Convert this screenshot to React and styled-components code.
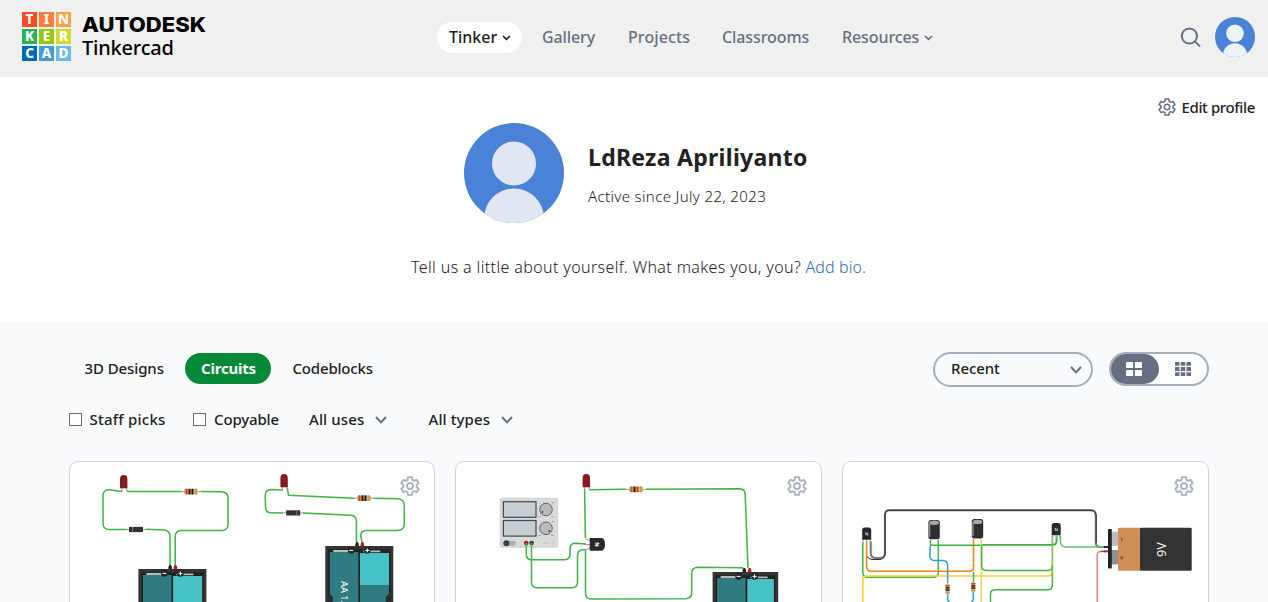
import React from 'react';
import styled, { createGlobalStyle } from 'styled-components';

const GlobalStyle = createGlobalStyle`
  * { box-sizing: border-box; }
  body {
    margin: 0;
    overflow: hidden;
    background: #f9fafc;
    color: #222;
    font-family: "Noto Sans", sans-serif;
    font-size: 15px;
  }
  svg { display: block; flex: none; }
`;

const Page = styled.div`
  height: 100vh;
  overflow: hidden;
  display: flex;
  flex-direction: column;
`;

const Label = styled.span`
  display: block;
  white-space: nowrap;
  width: ${p => (p.$w ? `${p.$w}px` : 'auto')};
  letter-spacing: ${p => p.$ls || 0}px;
`;

/* ---------- header ---------- */

const Header = styled.header`
  flex: none;
  height: 77px;
  padding: 0 13px 0 22px;
  display: flex;
  background: #f0f0f0;
`;

const Brand = styled.a`
  display: flex;
  width: 415px;
  padding-top: 12px;
  gap: 11px;
  color: #000;
`;

const Tiles = styled.div`
  display: grid;
  grid-template-columns: repeat(3, 15px);
  grid-auto-rows: 15px;
  gap: 2px;
`;

const Tile = styled.span`
  background: ${p => p.$c};
  color: #fff;
  font-size: 13.5px;
  font-weight: 800;
  line-height: 15px;
  text-align: center;
`;

const BrandText = styled.div`
  display: flex;
  flex-direction: column;
`;

const Company = styled.span`
  height: 24px;
  font-family: Inter, sans-serif;
  font-size: 20.5px;
  font-weight: 800;
  line-height: 26px;
  transform: scaleX(1.075);
  transform-origin: 0 0;
`;

const Product = styled.span`
  font-size: 20px;
  font-weight: 500;
  line-height: 24px;
  letter-spacing: -0.2px;
`;

const Nav = styled.nav`
  display: flex;
  gap: 32px;
  height: 31px;
  margin-top: 22px;
  font-size: 16px;
  font-weight: 500;
  line-height: 28px;
  color: #667081;
`;

const NavItem = styled.a`
  display: flex;
  align-items: center;
  gap: 5px;
  ${p => p.$active && `
    width: 85px;
    margin-right: -12px;
    padding-left: 12px;
    border-radius: 16px;
    background: #fff;
    color: #1d1d1d;
  `}
  ${Label} { height: 30px; }
`;

const HeaderTools = styled.div`
  display: flex;
  align-items: flex-start;
  gap: 14px;
  margin-left: auto;
  padding-top: 17px;
`;

const SearchBox = styled.span`
  padding-top: 10px;
`;

/* ---------- profile ---------- */

const Profile = styled.section`
  flex: none;
  height: 245px;
  padding-top: 20px;
  background: #fff;
`;

const EditRow = styled.a`
  display: flex;
  justify-content: flex-end;
  align-items: center;
  gap: 5px;
  height: 20px;
  margin-bottom: 6px;
  padding-right: 12.5px;
  font-weight: 500;
  line-height: 22px;
`;

const Identity = styled.div`
  display: flex;
  gap: 24px;
  margin-left: 464px;
`;

const IdentityText = styled.div`
  padding-top: 18px;
`;

const Name = styled.h1`
  margin: 0 0 11px;
  font-size: 23px;
  font-weight: 700;
  line-height: 32px;
  letter-spacing: 0.28px;
`;

const Since = styled.p`
  margin: 0;
  font-weight: 300;
  line-height: 24px;
  letter-spacing: 0.36px;
`;

const Bio = styled.p`
  display: flex;
  margin: 32px 0 0 411px;
  font-size: 16px;
  font-weight: 300;
  line-height: 24px;
`;

const BioLink = styled.a`
  color: #2d6db8;
  text-decoration: none;
`;

/* ---------- gallery ---------- */

const Content = styled.main`
  width: 1140px;
  margin-left: 69px;
  padding-top: 30px;
`;

const Toolbar = styled.div`
  display: flex;
  height: 35px;
`;

const Tabs = styled.div`
  display: flex;
  gap: 5.5px;
  padding-top: 1px;
`;

const Tab = styled.button`
  width: ${p => p.$width}px;
  height: 31px;
  padding: 0 0 0 ${p => p.$pad || 16}px;
  border: 0;
  border-radius: 16px;
  background: ${p => (p.$active ? '#048a36' : 'none')};
  color: ${p => (p.$active ? '#fff' : 'inherit')};
  font: inherit;
  font-weight: ${p => (p.$active ? 700 : 500)};
  line-height: 31px;
  text-align: left;
`;

const SortSelect = styled.div`
  display: flex;
  align-items: center;
  justify-content: space-between;
  width: 160px;
  height: 35px;
  margin-left: auto;
  padding: 0 9px 0 16px;
  border: 2px solid #a6aebc;
  border-radius: 18px;
  font-weight: 500;
  ${Label} { height: 31px; line-height: 29px; }
`;

const ViewToggle = styled.div`
  display: flex;
  width: 100px;
  height: 34px;
  margin-left: 16px;
  border: 2px solid #a6aebc;
  border-radius: 17px;
  background: #fff;
`;

const ViewOption = styled.span`
  display: grid;
  place-items: center;
  width: 48px;
  padding-right: ${p => (p.$active ? 2 : 0)}px;
  border-radius: 15px;
  background: ${p => (p.$active ? '#666f82' : 'none')};
  color: ${p => (p.$active ? '#fff' : '#666f82')};
`;

const Filters = styled.div`
  display: flex;
  align-items: center;
  height: 25px;
  margin: 20px 0 29px;
  font-weight: 500;
  ${Label} { height: 25px; line-height: 24px; }
`;

const Filter = styled.label`
  display: flex;
  align-items: center;
  gap: ${p => p.$gap}px;
  width: ${p => p.$width}px;
`;

const Checkbox = styled.span`
  width: 13px;
  height: 13px;
  border: 1px solid #6d6d6d;
  background: #fff;
`;

const Cards = styled.div`
  display: grid;
  grid-template-columns: 366px 367px 367px;
  gap: 20px;
`;

const Card = styled.article`
  position: relative;
  height: 260px;
  overflow: hidden;
  border: 1px solid #cfd4da;
  border-radius: 9px;
  background: #fff;
`;

const CardMenu = styled.span`
  position: absolute;
  top: 13px;
  right: 13px;
`;

/* ---------- icons ---------- */

const gearPath = (() => {
  const pts = [];
  for (let i = 0; i < 6; i += 1) {
    [[-21, 6.6], [-13, 9.1], [13, 9.1], [21, 6.6]].forEach(([d, r]) => {
      const a = ((i * 60 + d - 90) * Math.PI) / 180;
      pts.push(`${(11 + r * Math.cos(a)).toFixed(2)} ${(11 + r * Math.sin(a)).toFixed(2)}`);
    });
  }
  return `M${pts.join('L')}Z`;
})();

const Gear = ({ size = 22, color, stroke = 1.8 }) => (
  <svg width={size} height={size} viewBox="0 0 22 22" fill="none" stroke={color} strokeWidth={stroke} strokeLinejoin="round">
    <path d={gearPath} />
    <circle cx="11" cy="11" r="3" />
  </svg>
);

const Chevron = ({ w, h, color = 'currentColor', stroke = 2 }) => (
  <svg width={w} height={h} viewBox={`0 0 ${w} ${h}`} fill="none" stroke={color} strokeWidth={stroke}>
    <path d={`M1 1L${w / 2} ${h - 1.6}L${w - 1} 1`} />
  </svg>
);

const Avatar = ({ size, light }) => (
  <svg width={size} height={size} viewBox="0 0 100 100">
    <clipPath id={`avatar${size}`}><circle cx="50" cy="50" r="50" /></clipPath>
    <g clipPath={`url(#avatar${size})`}>
      <rect width="100" height="100" fill="#4a82d8" />
      <circle cx="50" cy="40.5" r="22" fill={light} />
      <circle cx="50" cy="95.5" r="30" fill={light} />
    </g>
  </svg>
);

const GridIcon = ({ n }) => {
  const gap = n === 2 ? 1.8 : 1.2;
  const w = (16 - gap * (n - 1)) / n;
  const h = (14 - gap * (n - 1)) / n;
  return (
    <svg width="16" height="14" fill="currentColor">
      {Array.from({ length: n * n }, (_, i) => (
        <rect key={i} x={(i % n) * (w + gap)} y={Math.floor(i / n) * (h + gap)} width={w} height={h} rx="0.5" />
      ))}
    </svg>
  );
};

/* ---------- circuit parts ---------- */

const GREEN = '#3db443';

const Wire = ({ d, c = GREEN, w = 1.5 }) => (
  <path d={d} fill="none" stroke={c} strokeWidth={w} strokeLinejoin="round" />
);

const Led = ({ x, y }) => (
  <g>
    <path d={`M${x + 2} ${y + 12}v5M${x + 6} ${y + 12}l1 4`} stroke="#999" fill="none" />
    <path d={`M${x} ${y + 4}a3.7 4 0 0 1 7.4 0v8l.4 1.3h-7.8z`} fill="#861c1e" />
  </g>
);

const Resistor = ({ x, y, vertical, bands = ['#e8321b', '#1a1a1a', '#1a1a1a', '#c49b50'] }) => (
  <g transform={`translate(${x} ${y})${vertical ? ' rotate(90) scale(.72)' : ''}`}>
    <path d="M-11 0H11" stroke="#9a9a9a" />
    <rect x="-7" y="-2.8" width="14" height="5.6" rx="1.8" fill="#dcb670" />
    {bands.map((c, i) => <rect key={i} x={[-5.5, -2.5, 0.5, 4][i]} y="-2.8" width="2" height="5.6" fill={c} />)}
  </g>
);

const Diode = ({ x, y, band }) => (
  <g>
    <path d={`M${x - 4} ${y}h22`} stroke="#999" />
    <rect x={x} y={y - 2.6} width="14" height="5.2" fill="#303133" />
    <rect x={x + band} y={y - 2.6} width="1.2" height="5.2" fill="#6b7780" />
  </g>
);

const BatteryPack = ({ x, y, w = 68, split, children }) => (
  <g transform={`translate(${x} ${y})`}>
    <path d="M30 0v-2l1-2h1.5l1 2v2z" fill="#222" />
    <path d="M35.3 0v-2l1-2h1.5l1 2v2z" fill="#b51d20" />
    <rect width={w} height="90" fill="#333" />
    <rect x="3" y="3.5" width={w - 6} height="90" fill="#1f2122" />
    <rect x="4.5" y="6" width="28.5" height="90" fill="#2f7c80" />
    <rect x="34.7" y="7" width={w - 39} height="90" fill="#46c2c6" />
    {split && <rect x="34.7" y="39" width={w - 39} height="60" fill="#2f7c80" />}
    {split && <path d="M3 46l4.5 5v40H3zM65 46l-4.5 5v40H65z" fill="#2b2c2d" />}
    <path d="M8 5h16M38 5.3h17" stroke="#b8babb" strokeWidth="1.8" />
    <circle cx="26" cy="4.4" r="3.3" fill="#252525" />
    <circle cx="42" cy="4.4" r="3.3" fill="#252525" />
    <path d="M24 4.4h4M40 4.4h4M42 2.4v4" stroke="#fff" />
    {children}
  </g>
);

const Capacitor = ({ x, y }) => (
  <g>
    <rect x={x} y={y} width="11.4" height="19.3" rx="2.6" fill="#2e2f31" />
    <path d={`M${x + 1.2} ${y + 4}v13`} stroke="#8d9499" strokeWidth="1.4" />
    <ellipse cx={x + 5.7} cy={y + 2.8} rx="4.8" ry="2.2" fill="#a6a7a9" />
  </g>
);

const Transistor = ({ x, y }) => (
  <g>
    <path d={`M${x + 1} ${y + 11}v5M${x + 4.5} ${y + 11}v5M${x + 8} ${y + 11}v5`} stroke="#aaa" strokeWidth=".9" />
    <path d={`M${x} ${y + 12.3}v-9.8q0-2.5 2.5-2.5h4q2.5 0 2.5 2.5v9.8z`} fill="#27282a" />
    <path d={`M${x + 3.6} ${y + 8}v-2.8l2 2.8v-2.8`} fill="none" stroke="#d7d7d7" strokeWidth=".8" />
  </g>
);

const Scene = ({ x, children }) => (
  <svg width="365" height="258" viewBox={`${x} 462 365 258`}>{children}</svg>
);

const LedLoops = () => (
  <Scene x={70}>
    <Wire d="M122 491.5L109 489.8Q103 489.5 103 496V523Q103 529.5 109 529.5H127" />
    <Wire d="M127 490.5L128 491.6H181M201 491.6L221 491.8Q228 492 228 498V524Q228 530.5 222 530.5H181Q175.2 530.8 175.2 537V566" />
    <Wire d="M146 529.3L164 530Q170 530.5 170 537V566" />
    <Led x={120} y={475} />
    <Resistor x={191} y={491.6} />
    <Diode x={129} y={529.5} band={3} />
    <BatteryPack x={138.4} y={569} />

    <Wire d="M282 490L271 489.6Q265.2 490 265.2 496L265.5 507Q265.5 512.8 271 512.8L283 513" />
    <Wire d="M287.4 488L288.4 495.2L354 498.3M374 498.3L398 498.7Q404.3 499.5 404.3 505V523Q404.3 530.5 398 530.5H366Q360.8 530.5 360.8 536L362 542" />
    <Wire d="M303 513L351 515.3Q356.4 515.6 356.4 522V542" />
    <Led x={280.4} y={474} />
    <Resistor x={364} y={498.2} />
    <Diode x={286.2} y={512.9} band={10} />
    <BatteryPack x={325.3} y={546} split>
      <text transform="translate(15.8 35) rotate(90)" fill="#eef5f5" fontSize="9" fontWeight="500">AA 1.5V</text>
    </BatteryPack>
  </Scene>
);

const PowerSupply = ({ x, y }) => (
  <g transform={`translate(${x} ${y})`}>
    <rect width="57.5" height="49" rx="1" fill="#d9dada" stroke="#c3c4c4" strokeWidth=".6" />
    {[3.5, 22.3].map(top => (
      <g key={top}>
        <rect x="3.2" y={top} width="32.6" height="15.6" fill="#c5cfd3" stroke="#44494b" strokeWidth="1.2" />
        <circle cx="45.8" cy={top + 7.8} r="6.3" fill="#b9bbbb" stroke="#55595a" strokeWidth=".9" />
        <path d={`M38 ${top + 15}h3M51 ${top + 15}h3M51.5 ${top + 1}h3`} stroke="#a0a2a2" strokeWidth=".9" />
      </g>
    ))}
    <circle cx="42.2" cy="13.8" r=".9" fill="#444" />
    <circle cx="49" cy="32.8" r=".9" fill="#444" />
    <rect x="3" y="42.6" width="12.5" height="5" rx="2.5" fill="#adafaf" />
    <circle cx="6.2" cy="45" r="3" fill="#3c4244" />
    <path d="M43 45h6M52 46l2-3" stroke="#c8caca" strokeWidth="1.8" />
    <circle cx="26" cy="44.8" r="2.3" fill="#b51d20" />
    <circle cx="31.4" cy="44.8" r="2.3" fill="#35403a" />
  </g>
);

const SupplyCircuit = () => (
  <Scene x={456}>
    <PowerSupply x={500.2} y={498.2} />
    <Wire d="M526.3 543V554Q526.3 559.8 532 559.8H564Q570 559.8 570 554V549Q570 543.5 575 543.3L586 544" />
    <Wire d="M531.5 543V582Q531.5 587.7 537 587.7H572Q577.5 587.7 577.5 582V556Q577.5 549.7 583 549.7H586" />
    <Wire d="M584.6 489L585.4 538" />
    <Wire d="M589 489.8L626 489.3M646 489.3L740 488.8Q745.2 489 745.2 495L748 568" />
    <Wire d="M585.5 551V593Q585.5 599 591 599L686 598.8Q691.7 598 691.7 593V573Q692 567.3 698 567.2L742.5 567.7V569" />
    <path d="M585.5 538.5L591 541.5M584 544.5H591M585.5 550.5L591 547" stroke="#999" fill="none" />
    <path d="M589.7 538H602q3 1 3 6.3t-3 6.4H589.7z" fill="#29292b" />
    <text transform="translate(595 542.2) rotate(90)" fill="#fff" fontSize="5.5" fontWeight="800">N</text>
    <Led x={582.6} y={474} />
    <Resistor x={636} y={489.4} bands={['#a5672c', '#1a1a1a', '#e8321b', '#c49b50']} />
    <BatteryPack x={712.6} y={572} w={65.6} />
  </Scene>
);

const NineVolt = ({ x, y }) => (
  <g transform={`translate(${x} ${y})`}>
    <rect x="3" y="4" width="7" height="14" fill="#bcbdbf" />
    <rect x="3" y="22.3" width="7" height="14.5" fill="#8e9092" />
    <rect y="1.3" width="3.8" height="39.4" rx=".6" fill="#232325" />
    <rect x="10" width="22.5" height="43" rx="1" fill="#cf8f55" />
    <rect x="32" width="51.7" height="43" rx="1" fill="#333334" />
    <path d="M13.8 9.7v3.6M12 30h3.6M13.8 28.2v3.6" stroke="#754717" strokeWidth=".9" />
    <text transform="translate(58.2 29.2) rotate(-90)" fill="#f2f2f2" fontSize="12.6">9V</text>
  </g>
);

const SensorCircuit = () => (
  <Scene x={843}>
    <Wire d="M870.7 541V553Q870.8 558 876 558H880Q885 558 885 553V515Q885 510 889 510H1091Q1095.8 510 1095.8 516V543Q1096 547 1100 547H1107" c="#77797b" w={2.1} />
    <Wire d="M867 556Q868 559 872 559.5H879Q884.6 559.5 885 554V515Q885 510.7 889 510.7H1091Q1096.2 510.7 1096.2 516V543" c="#2c2d2e" w={1} />
    <Wire d="M862.8 542V572Q863 577 867 577.2H934Q938.3 577 938.3 572V540" />
    <Wire d="M862.8 602V578Q863 576 866 576H1048Q1052.3 576 1052.3 572V566" c="#f3d32c" w={1.6} />
    <Wire d="M866.6 541V566Q867 571.3 871 571.3H970Q973.5 571 973.5 567V539" c="#ee8712" w={1.6} />
    <Wire d="M930.5 540V545.2H981" />
    <Wire d="M981 544.9H1052Q1056.6 544.9 1056.6 541V536" w={1.9} />
    <Wire d="M930.2 546L929.9 556Q930 560.4 934 560.4H943Q947.6 560.5 947.6 565V583M947.6 594V600L950 603M973.3 592V600L971 603" c="#2d9fd0" />
    <Wire d="M973.5 572V582" />
    <Wire d="M981.3 539V602" c="#e9d95c" w={1.7} />
    <Wire d="M981.6 545V566Q982 570.4 986 570.4H1048Q1052.4 570.4 1052.4 566V536" />
    <Wire d="M990.5 602V594Q990.5 590 995 589.8H1048Q1052.4 589.6 1052.4 585V566" />
    <Wire d="M1052.5 538V574" c="#8fc229" w={1} />
    <Wire d="M1060.5 536V542Q1060.8 546.9 1066 547H1104" c="#63c068" />
    <Wire d="M1097.2 602V556Q1097 551.4 1101 551.4" c="#e5807f" />
    <Wire d="M1101 551.4H1106" c="#cc2525" />
    <path d="M1104 547h4" stroke="#222" strokeWidth="1.8" />
    <path d="M1104 551.4h4" stroke="#b51d20" strokeWidth="1.8" />
    <Transistor x={862.2} y={527.4} />
    <Capacitor x={928.4} y={520} />
    <Capacitor x={971.8} y={519.1} />
    <Transistor x={1051.7} y={523} />
    <Resistor x={947.6} y={589} vertical />
    <Resistor x={973.3} y={587} vertical />
    <NineVolt x={1108} y={527.7} />
  </Scene>
);

/* ---------- page ---------- */

const tiles = [
  ['T', '#ff4a24'], ['I', '#ff7c3a'], ['N', '#ffa042'],
  ['K', '#27b355'], ['E', '#93c90a'], ['R', '#d4d733'],
  ['C', '#0069b8'], ['A', '#479bd1'], ['D', '#6dbae0'],
];

const nav = [
  { text: 'Gallery', w: 54, ls: -0.1 },
  { text: 'Projects', w: 62, ls: 0.1 },
  { text: 'Classrooms', w: 88, ls: -0.1 },
  { text: 'Resources', w: 77, ls: -0.1, menu: true },
];

const scenes = [LedLoops, SupplyCircuit, SensorCircuit];

export default function App() {
  return (
    <Page>
      <GlobalStyle />
      <Header>
        <Brand>
          <Tiles>{tiles.map(([l, c]) => <Tile key={l} $c={c}>{l}</Tile>)}</Tiles>
          <BrandText>
            <Company>AUTODESK</Company>
            <Product>Tinkercad</Product>
          </BrandText>
        </Brand>
        <Nav>
          <NavItem $active><Label $w={48}>Tinker</Label><Chevron w={9} h={6} stroke={1.6} /></NavItem>
          {nav.map(({ text, w, ls, menu }) => (
            <NavItem key={text}>
              <Label $w={w} $ls={ls}>{text}</Label>
              {menu && <Chevron w={9} h={6} stroke={1.6} />}
            </NavItem>
          ))}
        </Nav>
        <HeaderTools>
          <SearchBox>
            <svg width="21" height="21" viewBox="0 0 21 21" fill="none" stroke="#667081" strokeWidth="2">
              <circle cx="9.4" cy="9" r="7.6" />
              <path d="M14.8 14.4L20 19.4" />
            </svg>
          </SearchBox>
          <Avatar size={40} light="#ebf2fb" />
        </HeaderTools>
      </Header>

      <Profile>
        <EditRow>
          <Gear size={20} color="#667081" stroke={1.7} />
          <Label $w={74} $ls={-0.38}>Edit profile</Label>
        </EditRow>
        <Identity>
          <Avatar size={100} light="#e1e7f2" />
          <IdentityText>
            <Name>LdReza Apriliyanto</Name>
            <Since>Active since July 22, 2023</Since>
          </IdentityText>
        </Identity>
        <Bio>
          <Label $w={394.5} $ls={0.38}>Tell us a little about yourself. What makes you, you?</Label>
          <BioLink href="#bio"><Label $ls={0.1}>Add bio.</Label></BioLink>
        </Bio>
      </Profile>

      <Content>
        <Toolbar>
          <Tabs>
            <Tab $width={110.5} $pad={15.5}><Label $ls={-0.1}>3D Designs</Label></Tab>
            <Tab $width={86} $active><Label $ls={-0.2}>Circuits</Label></Tab>
            <Tab $width={112}><Label $ls={-0.18}>Codeblocks</Label></Tab>
          </Tabs>
          <SortSelect><Label $ls={-0.1}>Recent</Label><Chevron w={12} h={8} color="#666f82" /></SortSelect>
          <ViewToggle>
            <ViewOption $active><GridIcon n={2} /></ViewOption>
            <ViewOption><GridIcon n={3} /></ViewOption>
          </ViewToggle>
        </Toolbar>
        <Filters>
          <Filter $gap={7.5} $width={124}><Checkbox /><Label $ls={0.22}>Staff picks</Label></Filter>
          <Filter $gap={8} $width={116}><Checkbox /><Label $ls={-0.15}>Copyable</Label></Filter>
          <Filter $gap={10} $width={119.5}><Label $w={56} $ls={0.12}>All uses</Label><Chevron w={12} h={8} color="#666f82" /></Filter>
          <Filter $gap={10} $width={90}><Label $w={62} $ls={0.1}>All types</Label><Chevron w={12} h={8} color="#666f82" /></Filter>
        </Filters>
        <Cards>
          {scenes.map((Drawing, i) => (
            <Card key={i}>
              <Drawing />
              <CardMenu><Gear color="#abb3bf" stroke={1.9} /></CardMenu>
            </Card>
          ))}
        </Cards>
      </Content>
    </Page>
  );
}
